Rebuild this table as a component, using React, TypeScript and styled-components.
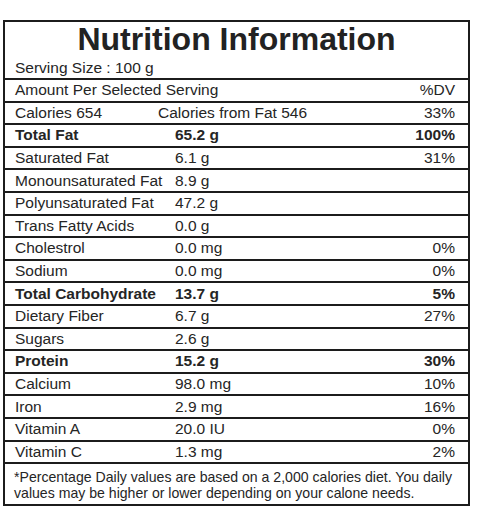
import React from "react";
import styled, { createGlobalStyle } from "styled-components";

const GlobalStyle = createGlobalStyle`
  html, body {
    margin: 0;
    padding: 0;
    background: #fff;
  }
  body {
    font-family: "Liberation Sans", Arial, sans-serif;
    color: #252525;
  }
`;

const Page = styled.div`
  width: 480px;
  height: 514px;
  padding: 20px 0 0 3px;
  box-sizing: border-box;
`;

const Label = styled.div`
  width: 467px;
  border: 2px solid #1c1c1c;
  box-sizing: border-box;
`;

const Header = styled.div`
  height: 56px;
  padding-top: 1px;
  box-sizing: border-box;
`;

const Title = styled.h1`
  margin: 0;
  font-size: 32px;
  line-height: 32px;
  font-weight: 700;
  text-align: center;
  color: #222;
`;

const Serving = styled.div`
  margin-top: 3.5px;
  padding-left: 10px;
  font-size: 15.5px;
  line-height: 18px;
`;

const Row = styled.div<{ $bold?: boolean }>`
  display: grid;
  grid-template-columns: 160px 1fr auto;
  align-items: center;
  height: 22.6px;
  box-sizing: border-box;
  border-top: 2px solid #1c1c1c;
  padding: 0 13px 0 10px;
  font-size: 15.5px;
  line-height: 20px;
  font-weight: ${(p) => (p.$bold ? 700 : 400)};
  white-space: nowrap;
`;

const CaloriesRow = styled(Row)`
  grid-template-columns: 143px 1fr auto;
`;

const Cell = styled.span``;

const Pct = styled.span`
  text-align: right;
`;

const Footnote = styled.div`
  border-top: 2px solid #1c1c1c;
  height: 42px;
  box-sizing: border-box;
  padding: 5px 6px 0 9px;
  font-size: 14.1px;
  line-height: 16px;
`;

interface Nutrient {
  name: string;
  amount: string;
  dv?: string;
  bold?: boolean;
}

const nutrients: Nutrient[] = [
  { name: "Total Fat", amount: "65.2 g", dv: "100%", bold: true },
  { name: "Saturated Fat", amount: "6.1 g", dv: "31%" },
  { name: "Monounsaturated Fat", amount: "8.9 g" },
  { name: "Polyunsaturated Fat", amount: "47.2 g" },
  { name: "Trans Fatty Acids", amount: "0.0 g" },
  { name: "Cholestrol", amount: "0.0 mg", dv: "0%" },
  { name: "Sodium", amount: "0.0 mg", dv: "0%" },
  { name: "Total Carbohydrate", amount: "13.7 g", dv: "5%", bold: true },
  { name: "Dietary Fiber", amount: "6.7 g", dv: "27%" },
  { name: "Sugars", amount: "2.6 g" },
  { name: "Protein", amount: "15.2 g", dv: "30%", bold: true },
  { name: "Calcium", amount: "98.0 mg", dv: "10%" },
  { name: "Iron", amount: "2.9 mg", dv: "16%" },
  { name: "Vitamin A", amount: "20.0 IU", dv: "0%" },
  { name: "Vitamin C", amount: "1.3 mg", dv: "2%" },
];

const App: React.FC = () => {
  return (
    <Page>
      <GlobalStyle />
      <Label>
        <Header>
          <Title>Nutrition Information</Title>
          <Serving>Serving Size : 100 g</Serving>
        </Header>
        <Row>
          <Cell>Amount Per Selected Serving</Cell>
          <Cell />
          <Pct>%DV</Pct>
        </Row>
        <CaloriesRow>
          <Cell>Calories 654</Cell>
          <Cell>Calories from Fat 546</Cell>
          <Pct>33%</Pct>
        </CaloriesRow>
        {nutrients.map((n) => (
          <Row key={n.name} $bold={n.bold}>
            <Cell>{n.name}</Cell>
            <Cell>{n.amount}</Cell>
            <Pct>{n.dv ?? ""}</Pct>
          </Row>
        ))}
        <Footnote>
          *Percentage Daily values are based on a 2,000 calories diet. You daily
          values may be higher or lower depending on your calone needs.
        </Footnote>
      </Label>
    </Page>
  );
};

export default App;
